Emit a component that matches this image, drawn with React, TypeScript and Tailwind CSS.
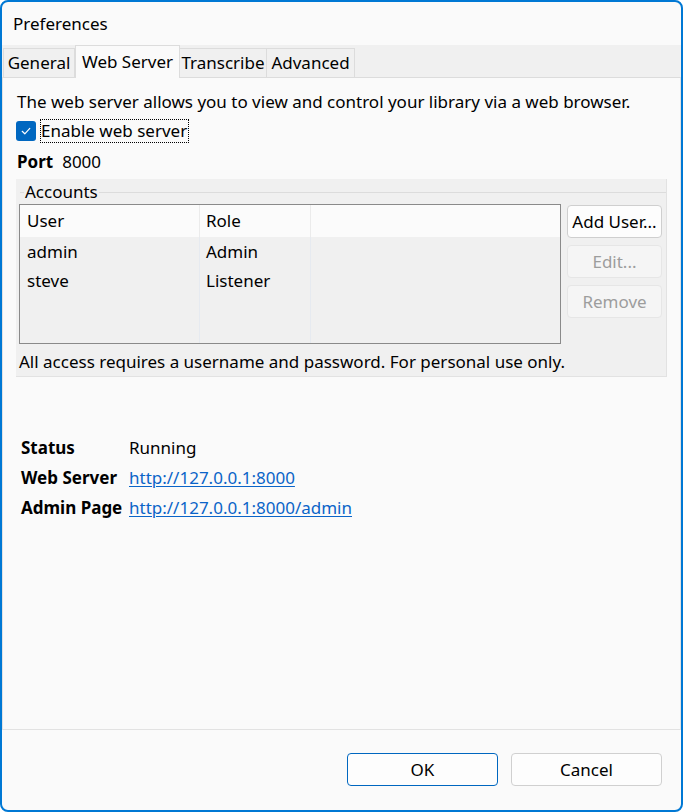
import React from 'react';

const tabs = [
  { name: 'General', width: 'w-[72px]' },
  { name: 'Web Server', width: 'w-[105px]' },
  { name: 'Transcribe', width: 'w-[88px]' },
  { name: 'Advanced', width: 'w-[89px]' },
];

const accounts = [
  { user: 'admin', role: 'Admin' },
  { user: 'steve', role: 'Listener' },
  { user: '', role: '' },
  { user: '', role: '' },
];

function Tabs() {
  return (
    <div className="flex h-[32px] items-end bg-[#f0f0f0] pl-[1px]">
      {tabs.map((t) =>
        t.name === 'Web Server' ? (
          <div
            key={t.name}
            className={`${t.width} relative z-10 -mb-px flex h-[33px] items-center justify-center border border-b-0 border-[#dcdcdc] bg-[#fafafa]`}
          >
            {t.name}
          </div>
        ) : (
          <div
            key={t.name}
            className={`${t.width} flex h-[29px] items-center justify-center border border-b-0 border-[#dcdcdc] bg-[#f0f0f0] -ml-px first:ml-0`}
          >
            {t.name}
          </div>
        )
      )}
    </div>
  );
}

function AccountsGroup() {
  return (
    <div className="ml-[-1px] mt-[5px] w-[651px] border-b border-r border-[#e2e2e2] bg-[#f0f0f0] pb-[2px]">
      <div className="flex h-[24px] items-center pl-[4px] pt-[2px]">
        <div className="h-px w-[4px] bg-[#dcdcdc]" />
        <span className="px-[1px]">Accounts</span>
        <div className="h-px flex-1 bg-[#dcdcdc]" />
      </div>
      <div className="mt-[1px] flex pl-[3px]">
        <div className="flex h-[140px] w-[542px] flex-col border border-[#8a8a8a]">
          <div className="flex h-[32px] shrink-0 items-center bg-[#fbfbfb]">
            <div className="flex h-full w-[180px] items-center border-r border-[#ebebeb] pl-[7px]">User</div>
            <div className="flex h-full w-[111px] items-center border-r border-[#ebebeb] pl-[6px]">Role</div>
            <div className="flex-1" />
          </div>
          <div className="flex flex-1 flex-col overflow-hidden">
            {accounts.map((a, i) => (
              <div key={i} className="flex h-[29px] shrink-0">
                <div className="flex h-full w-[180px] items-center border-r border-[#e6eaf0] pl-[7px]">{a.user}</div>
                <div className="flex h-full w-[111px] items-center border-r border-[#e6eaf0] pl-[6px]">{a.role}</div>
                <div className="flex-1" />
              </div>
            ))}
          </div>
        </div>
        <div className="ml-[6px] flex w-[95px] flex-col gap-[7px] pt-[1px]">
          <button className="h-[33px] whitespace-nowrap rounded-[4px] border border-[#cfcfcf] bg-[#fdfdfd] text-black">Add User...</button>
          <button className="h-[33px] rounded-[4px] border border-[#e6e6e6] bg-[#f5f5f5] text-[#9d9d9d]">Edit...</button>
          <button className="h-[33px] rounded-[4px] border border-[#e6e6e6] bg-[#f5f5f5] text-[#9d9d9d]">Remove</button>
        </div>
      </div>
      <div className="mt-[6px] flex h-[24px] items-center pl-[3px]">
        All access requires a username and password. For personal use only.
      </div>
    </div>
  );
}

function StatusRows() {
  const rows = [
    { label: 'Status', value: 'Running', link: false },
    { label: 'Web Server', value: 'http://127.0.0.1:8000', link: true },
    { label: 'Admin Page', value: 'http://127.0.0.1:8000/admin', link: true },
  ];
  return (
    <div className="mt-[56px] flex flex-col pl-[4px]">
      {rows.map((r) => (
        <div key={r.label} className="flex h-[30px] items-center">
          <span className="w-[108px] whitespace-nowrap font-bold">{r.label}</span>
          {r.link ? (
            <span className="text-[#0a64c8] underline underline-offset-2">{r.value}</span>
          ) : (
            <span>{r.value}</span>
          )}
        </div>
      ))}
    </div>
  );
}

export default function App() {
  return (
    <div
      className="flex h-[812px] w-[683px] flex-col overflow-hidden rounded-[8px] border-2 border-[#0078d4] bg-[#fafafa] text-[17px] text-black"
      style={{ fontFamily: '"Noto Sans", "Open Sans", sans-serif' }}
    >
      <div className="flex h-[43px] shrink-0 items-center pl-[11px] pt-[1px]">Preferences</div>
      <Tabs />
      <div className="flex h-[653px] shrink-0 flex-col border border-t-[#dcdcdc] border-[#e2e2e2] bg-[#fafafa] pl-[14px]">
        <div className="mt-[12px] flex h-[24px] items-center whitespace-nowrap">
          The web server allows you to view and control your library via a web browser.
        </div>
        <div className="mt-[5px] flex h-[24px] items-center">
          <span className="ml-[-1px] flex h-[20px] w-[20px] items-center justify-center rounded-[3px] bg-[#0067c0]">
            <svg width="12" height="12" viewBox="0 0 12 12" fill="none">
              <path d="M2.2 6.3 L4.8 8.8 L9.8 3.4" stroke="white" strokeWidth="1.2" strokeLinecap="round" strokeLinejoin="round" />
            </svg>
          </span>
          <span className="ml-[4px] flex h-[24px] items-center border border-dotted border-black pr-[1px]">Enable web server</span>
        </div>
        <div className="mt-[7px] flex h-[24px] items-center">
          <span className="font-bold">Port</span>
          <span className="ml-[9px]">8000</span>
        </div>
        <AccountsGroup />
        <StatusRows />
      </div>
      <div className="flex flex-1 items-start justify-end gap-[13px] pr-[19px] pt-[23px]">
        <button className="h-[33px] w-[151px] rounded-[4px] border border-[#0067c0] bg-[#fdfdfd]">OK</button>
        <button className="h-[33px] w-[151px] rounded-[4px] border border-[#d0d0d0] bg-[#fdfdfd]">Cancel</button>
      </div>
    </div>
  );
}
